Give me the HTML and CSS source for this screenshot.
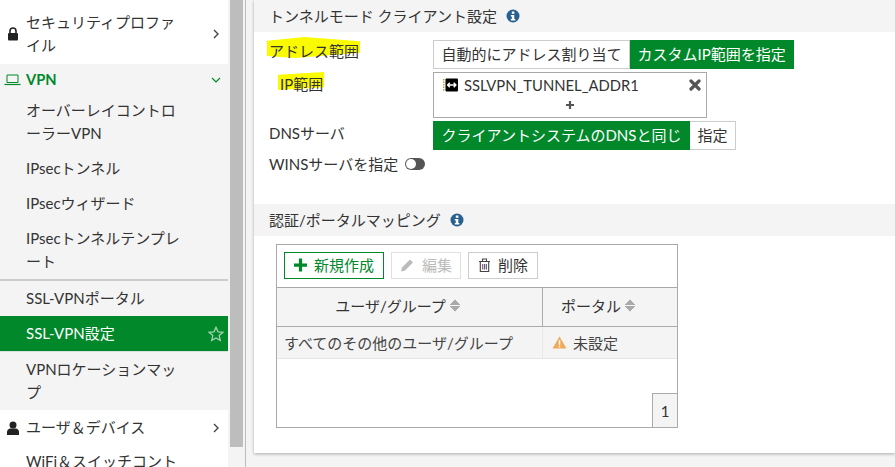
FILE: index.html
```html
<!DOCTYPE html>
<html lang="ja">
<head>
<meta charset="utf-8">
<title>SSL-VPN設定</title>
<link rel="stylesheet" href="styles.css">
</head>
<body>
<div class="app">
  <nav class="side">
    <div class="nav top first">
      <svg class="nicon" viewBox="0 0 12 14"><path d="M3 6V4a3 3 0 0 1 6 0v2" fill="none" stroke="#222" stroke-width="1.6"/><rect x="1" y="6" width="10" height="7.500" rx="1" fill="#222"/></svg>
      <span class="label">セキュリティプロファイル</span>
      <svg class="chev" viewBox="0 0 8 12"><path d="M2 2l4 4-4 4" fill="none" stroke="#444" stroke-width="1.4"/></svg>
    </div>
    <div class="group">
      <div class="nav vpn">
        <svg class="nicon wide" viewBox="0 0 16 12"><path d="M2.500 1h11v7.500h-11z" fill="none" stroke="#00882a" stroke-width="1"/><path d="M0 10.500h16" stroke="#00882a" stroke-width="1.200"/></svg>
        <span class="label">VPN</span>
        <svg class="chev down" viewBox="0 0 12 8"><path d="M2 2l4 4 4-4" fill="none" stroke="#00882a" stroke-width="1.200"/></svg>
      </div>
      <div class="nav sub">オーバーレイコントローラーVPN</div>
      <div class="nav sub">IPsecトンネル</div>
      <div class="nav sub">IPsecウィザード</div>
      <div class="nav sub">IPsecトンネルテンプレート</div>
      <div class="sep"></div>
      <div class="nav sub">SSL-VPNポータル</div>
      <div class="nav sub active">
        <span class="label">SSL-VPN設定</span>
        <svg class="star" viewBox="0 0 16 16"><path d="M8 1.300l2 4.500 4.900.5-3.700 3.300 1.100 4.800L8 12l-4.300 2.400 1.100-4.800L1.100 6.300l4.900-.5z" fill="none" stroke="#9fd3ae" stroke-width="1.300"/></svg>
      </div>
      <div class="sep light"></div>
      <div class="nav sub">VPNロケーションマップ</div>
    </div>
    <div class="nav top">
      <svg class="nicon user" viewBox="0 0 12 14"><circle cx="6" cy="4" r="3.500" fill="#222"/><path d="M0 14v-3c0-2.300 2-3.500 3-3.500h6c1 0 3 1.200 3 3.500v3z" fill="#222"/></svg>
      <span class="label">ユーザ＆デバイス</span>
      <svg class="chev" viewBox="0 0 8 12"><path d="M2 2l4 4-4 4" fill="none" stroke="#444" stroke-width="1.4"/></svg>
    </div>
    <div class="nav top last">
      <span class="nicon"></span>
      <span class="label">WiFi＆スイッチコントローラ</span>
    </div>
  </nav>
  <div class="scroll"><div class="thumb"></div></div>
  <main class="main">
    <section class="card">
      <h2 class="band">トンネルモード クライアント設定
        <svg class="info" viewBox="0 0 14 14"><circle cx="7" cy="7" r="6.500" fill="#28608f"/><rect x="5.800" y="2.500" width="2.600" height="2.300" fill="#fff"/><path d="M4.800 6h3.500v4h1v1.500H4.800V10h1V7.500h-1z" fill="#fff"/></svg>
      </h2>
      <div class="form">
        <div class="row r1">
          <span class="flabel"><span class="marker m1"></span><span class="ftext">アドレス範囲</span></span>
          <div class="seg"><span class="opt">自動的にアドレス割り当て</span><span class="opt on">カスタムIP範囲を指定</span></div>
        </div>
        <div class="row r2">
          <span class="flabel ind"><span class="marker m2"></span><span class="ftext">IP範囲</span></span>
          <div class="picker">
            <div class="entry">
              <svg class="addr" viewBox="0 0 15 14"><rect x="2.500" y="0.500" width="12.500" height="13" rx="1" fill="#000"/><path d="M0.700 1v12" stroke="#c79a3a" stroke-width="1.500" stroke-dasharray="1.500 1"/><path d="M4.500 7h8.500M6.800 4.800L4.600 7l2.200 2.200M10.700 4.800L12.900 7l-2.200 2.200" fill="none" stroke="#fff" stroke-width="1.400"/></svg>
              <span class="ename">SSLVPN_TUNNEL_ADDR1</span>
              <svg class="close" viewBox="0 0 12 12"><path d="M2 2l8 8M10 2l-8 8" stroke="#555" stroke-width="3.200" stroke-linecap="round"/></svg>
            </div>
            <div class="plus"><svg class="plusi" viewBox="0 0 8 8"><path d="M4 0v8M0 4h8" stroke="#555" stroke-width="2.200"/></svg></div>
          </div>
        </div>
        <div class="row r3">
          <span class="flabel plain">DNSサーバ</span>
          <div class="seg"><span class="opt on">クライアントシステムのDNSと同じ</span><span class="opt">指定</span></div>
        </div>
        <div class="row r4">
          <span class="flabel auto">WINSサーバを指定</span>
          <span class="toggle"><span class="knob"></span></span>
        </div>
      </div>
      <h2 class="band">認証/ポータルマッピング
        <svg class="info" viewBox="0 0 14 14"><circle cx="7" cy="7" r="6.500" fill="#28608f"/><rect x="5.800" y="2.500" width="2.600" height="2.300" fill="#fff"/><path d="M4.800 6h3.500v4h1v1.500H4.800V10h1V7.500h-1z" fill="#fff"/></svg>
      </h2>
      <div class="tablewrap">
        <div class="toolbar">
          <button class="btn new"><svg class="bi" viewBox="0 0 12 12"><path d="M6 0v12M0 6h12" stroke="#00882a" stroke-width="3"/></svg>新規作成</button>
          <button class="btn off"><svg class="bi pen" viewBox="0 0 14 14"><path d="M0.500 13.500l1-4L9.500 1.500l3 3-8 8z" fill="#bbb"/></svg>編集</button>
          <button class="btn del"><svg class="bi" viewBox="0 0 12 14"><path d="M.5 3.500h11M4 3.500V1h4v2.500M1.800 3.500v10h8.400v-10" fill="none" stroke="#444" stroke-width="1.100"/><path d="M4.200 6v5.500" stroke="#a04a6a" stroke-width="1.100"/><path d="M6 6v5.500" stroke="#4a6aa0" stroke-width="1.100"/><path d="M7.800 6v5.500" stroke="#555" stroke-width="1.100"/></svg>削除</button>
        </div>
        <div class="thead">
          <div class="th c1">ユーザ/グループ<span class="sort"></span></div>
          <div class="th c2">ポータル<span class="sort"></span></div>
        </div>
        <div class="trow">
          <div class="td c1">すべてのその他のユーザ/グループ</div>
          <div class="td c2"><svg class="warn" viewBox="0 0 16 14"><path d="M8 0.500L15.500 13.500H.5z" fill="#f0a95b"/><path d="M7.200 4.500h1.600v5H7.200zM7.200 10.500h1.600V12H7.200z" fill="#fff"/></svg>未設定</div>
        </div>
        <div class="tfoot"><span class="page">1</span></div>
      </div>
    </section>
  </main>
</div>
</body>
</html>
```
FILE: styles.css
```css
* { box-sizing: border-box; }
html, body { margin: 0; height: 467px; overflow: hidden; }
body { font-family: Lato, "Noto Sans CJK JP", sans-serif; font-size: 15px; color: #333; background: #fff; }
.app { display: flex; height: 467px; overflow: hidden; }

.side { width: 228px; flex: none; background: #fff; height: 467px; overflow: hidden; }
.nav { line-height: 23px; padding: 6px 44px 6px 26px; color: #333; word-break: break-all; }
.top { display: flex; align-items: center; padding-left: 0; padding-right: 0; }
.first { padding-top: 11px; padding-bottom: 7px; }
.last { align-items: flex-start; padding-top: 5px; }
.nicon { width: 26px; height: 14px; flex: none; padding: 0 7px; }
.nicon.wide { padding: 0 5px 0 4px; height: 12px; }
.label { flex: 0 0 158px; min-width: 0; }
.chev { width: 8px; height: 12px; flex: none; margin: 0 8px 0 auto; }
.group { background: #f4f4f4; }
.vpn { display: flex; align-items: center; padding: 4px 0 2px; color: #00882a; font-weight: 700; font-size: 14.7px; }
.chev.down { width: 12px; height: 8px; margin: 0 6px 0 auto; }
.sep { height: 2px; background: #ccc; }
.sep.light { height: 1px; background: #d6e2d9; }
.active { display: flex; align-items: center; justify-content: space-between; background: #00882a; color: #fff; padding-right: 4px; }
.star { width: 16px; height: 16px; flex: none; }

.scroll { width: 17px; flex: none; padding: 0 2px; background: #f4f4f4; }
.thumb { width: 13px; height: 447px; background: #bdbdbd; }

.main { flex: 1; min-width: 0; background: #f4f4f4; padding: 0 0 14px 8px; border-left: 1px solid #bbb; }
.card { background: #fff; height: 453px; box-shadow: 0 1px 3px rgba(0, 0, 0, .3); }
.band { margin: 0; height: 32px; background: #f4f4f4; font-size: 15px; font-weight: 400; color: #333; line-height: 32px; padding-left: 15px; display: flex; align-items: center; }
.info { width: 14px; height: 14px; margin-left: 9px; flex: none; }

.form { padding: 8px 0 0 15px; height: 172px; }
.row { display: flex; }
.r1, .r3 { height: 29px; }
.r2 { height: 46px; margin: 3px 0; }
.r4 { height: 29px; align-items: center; margin-top: -1px; }
.flabel { width: 164px; flex: none; line-height: 22px; position: relative; }
.flabel.ind { padding-left: 11px; line-height: 24px; }
.flabel.plain { line-height: 24px; }
.flabel.auto { width: auto; }
.ftext { position: relative; }
.marker { position: absolute; background: #fbfb00; }
.m1 { left: -2px; top: -3px; width: 93px; height: 21px; clip-path: polygon(0 18%, 40% 0, 100% 20%, 100% 75%, 30% 100%, 0 90%); }
.m2 { left: 9px; top: 0; width: 46px; height: 18px; clip-path: polygon(0 15%, 100% 0, 100% 85%, 0 100%); }
.seg { display: flex; height: 29px; }
.opt { display: block; padding: 0 7.5px; line-height: 27px; border: 1px solid #ccc; background: #fff; color: #333; white-space: nowrap; }
.opt + .opt { border-left: 0; }
.opt.on { background: #00882a; border-color: #00882a; color: #fff; }
.picker { width: 274px; height: 46px; border: 1px solid #aaa; background: #fff; }
.entry { display: flex; align-items: center; height: 24px; padding: 0 5px 0 9px; }
.addr { width: 15px; height: 14px; flex: none; margin-right: 6px; }
.ename { flex: 1; font-size: 14.8px; color: #333; }
.close { width: 12px; height: 12px; flex: none; }
.plus { display: flex; justify-content: center; align-items: center; height: 16px; }
.plusi { width: 8px; height: 8px; }
.toggle { display: block; position: relative; width: 20px; height: 12px; margin-left: 7px; border-radius: 6px; background: #555; }
.knob { position: absolute; left: 1px; top: 1px; width: 10px; height: 10px; border-radius: 50%; background: #fff; }

.tablewrap { margin: 8px 0 0 22px; width: 402px; height: 184px; border: 1px solid #aaa; background: #fff; display: flex; flex-direction: column; }
.toolbar { display: flex; gap: 7px; height: 43px; padding: 7px 0 0 7px; border-bottom: 1px solid #aaa; }
.btn { height: 27px; padding: 0 0 2px; justify-content: center; background: #fff; border: 1px solid #ccc; display: flex; align-items: center; gap: 7px; font: inherit; color: #333; width: 70px; }
.btn.new { border-color: #00882a; color: #00882a; width: 100px; }
.btn.off { color: #bbb; border-color: #e0e0e0; }
.bi { width: 13px; height: 14px; flex: none; }
.bi.pen { width: 15px; }
.thead { display: flex; height: 39px; background: #f4f4f4; border-bottom: 1px solid #aaa; }
.th { display: flex; align-items: center; justify-content: center; padding: 0 24px 3px 0; }
.c1 { width: 266px; border-right: 1px solid #aaa; }
.c2 { flex: 1; min-width: 0; }
.sort { display: block; width: 10px; height: 13px; margin-left: 4px; background:
  linear-gradient(to bottom right, transparent 49%, #aaa 50%) 0 0 / 5px 6px no-repeat,
  linear-gradient(to bottom left, transparent 49%, #aaa 50%) 5px 0 / 5px 6px no-repeat,
  linear-gradient(to top right, transparent 49%, #aaa 50%) 0 7px / 5px 6px no-repeat,
  linear-gradient(to top left, transparent 49%, #aaa 50%) 5px 7px / 5px 6px no-repeat; }
.trow { display: flex; height: 32px; background: #f4f4f4; border-bottom: 1px solid #e4e4e4; }
.td { display: flex; align-items: center; color: #444; padding-left: 7px; }
.td.c1 { border-right: 1px solid #e8e8e8; }
.td.c2 { padding-left: 9px; }
.warn { width: 15px; height: 13px; margin-right: 6px; flex: none; }
.tfoot { flex: 1; display: flex; justify-content: flex-end; align-items: flex-end; }
.page { display: block; width: 25px; height: 34px; line-height: 34px; text-align: center; background: #f4f4f4; border: solid #aaa; border-width: 1px 0 0 1px; color: #333; }
```
